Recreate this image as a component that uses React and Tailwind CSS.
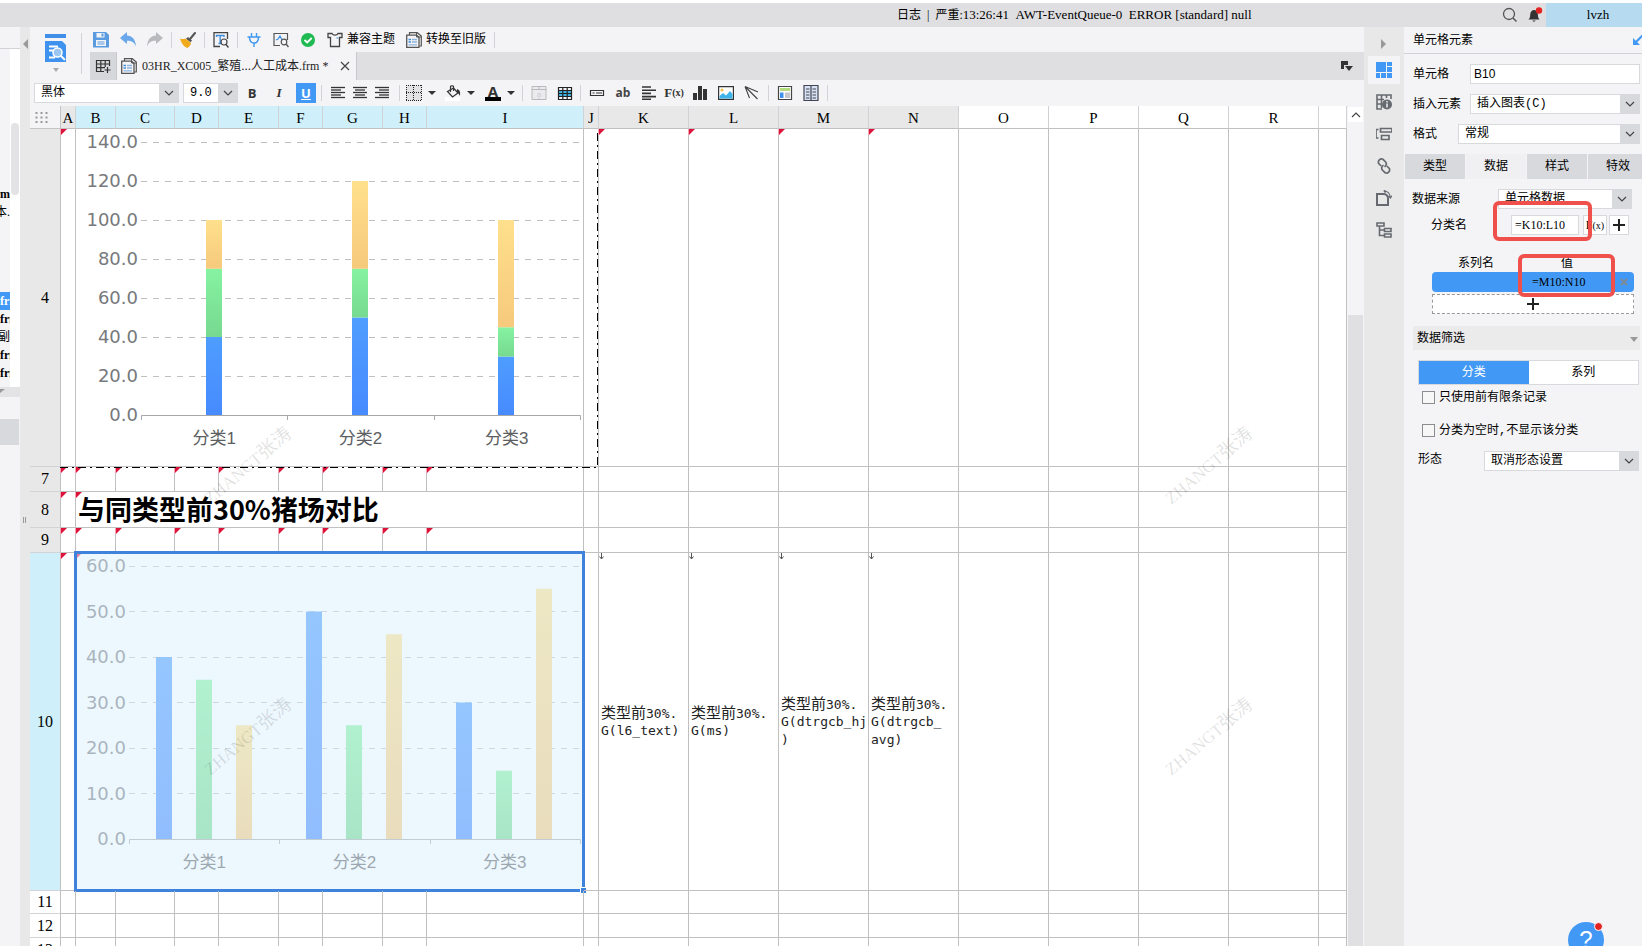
import React from "react";

const UI = "font-['Liberation_Mono','Noto_Sans_CJK_SC',monospace]";
const SERIF = "font-['Liberation_Serif','Noto_Sans_CJK_SC',serif]";

function Glyph({ children, w = 16, h = 16, className = "" }) {
  return (
    <svg width={w} height={h} viewBox={`0 0 ${w} ${h}`} fill="none" className={`block shrink-0 ${className}`} aria-hidden="true">
      {children}
    </svg>
  );
}

function IconButton({ label, children, className = "" }) {
  return (
    <button type="button" aria-label={label} className={`flex shrink-0 items-center justify-center ${className}`}>
      {children}
    </button>
  );
}

function Divider({ className = "" }) {
  return <span className={`h-4 w-px shrink-0 bg-[#d2d3d6] ${className}`} />;
}

function Caret({ className = "" }) {
  return (
    <Glyph w={8} h={4} className={className}>
      <path d="M0 0h8L4 4z" fill="#333" />
    </Glyph>
  );
}

function Select({ label, value, id, className = "" }) {
  return (
    <div className={`relative h-5 ${className}`}>
      <select
        id={id}
        aria-label={label}
        defaultValue={value}
        className="block h-5 w-full appearance-none border border-[#d8d9dd] bg-white pl-[6px] pr-5 text-xs leading-[18px] text-black outline-none"
      >
        <option>{value}</option>
      </select>
      <span className="pointer-events-none absolute inset-y-0 right-0 flex w-5 items-center justify-center bg-[#d8d9dd]">
        <Glyph w={10} h={6}>
          <path d="M1 1l4 4 4-4" stroke="#444" strokeWidth="1.2" />
        </Glyph>
      </span>
    </div>
  );
}

/* ---------- icons ---------- */
const SaveIcon = () => (
  <Glyph>
    <path d="M0 0h13l3 3v12.500H0z" fill="#5b9be0" />
    <path d="M3.500 1h8v4.500h-8z" fill="#f4f4f6" />
    <path d="M8.500 1.500h2v3h-2z" fill="#5b9be0" />
    <path d="M3 8h10v6H3z" fill="#f4f4f6" />
    <path d="M4.500 10h7M4.500 12h7" stroke="#5b9be0" />
  </Glyph>
);
const UndoIcon = () => (
  <Glyph>
    <path d="M0 6L7 0v3.500c5 .3 8.500 3.500 9 11-2-4.500-4.500-5.800-9-5.700V12z" fill="#6aa7ea" />
  </Glyph>
);
const RedoIcon = () => (
  <Glyph>
    <path d="M16 6L9 0v3.500C4 3.800.5 7 0 14.500c2-4.500 4.500-5.800 9-5.700V12z" fill="#b9babd" />
  </Glyph>
);
const BrushIcon = () => (
  <Glyph>
    <path d="M15 1L10 7" stroke="#555" strokeWidth="2" strokeLinecap="round" />
    <path d="M8 5l4 3.500-1.500 1.800L6 6.800z" fill="#555" />
    <path d="M5.500 6.500l5.500 4.500c-.3 2.500-1.800 4-4 5C3.500 14.500 1.500 11.500 0 6.500c2 .8 4 .8 5.500 0z" fill="#f0ab1c" />
  </Glyph>
);
const FindTextIcon = () => (
  <Glyph>
    <path d="M7 14.500H1V.7h13.500V7" stroke="#444" strokeWidth="1.300" />
    <path d="M3.500 5V3.500H11V5M7.200 3.500v8M5.500 11.500H9" stroke="#3f8fe0" strokeWidth="1.400" />
    <circle cx="11" cy="10" r="3" stroke="#444" strokeWidth="1.200" fill="#f4f4f6" />
    <path d="M13 12.500l2.500 3" stroke="#444" strokeWidth="1.400" />
  </Glyph>
);
const PlugIcon = () => (
  <Glyph>
    <path d="M1.500 5h13M3.500 5c0 4.500 1.800 6 4.500 6s4.500-1.500 4.500-6M5.500 1v4M10.500 1v4M8 11v4" stroke="#3f97f0" strokeWidth="1.400" />
  </Glyph>
);
const MonitorIcon = () => (
  <Glyph>
    <path d="M7 13.500H1v-12h13.500V8" stroke="#555" strokeWidth="1.200" />
    <path d="M3 8l2-1 2-3 2 4 1-1" stroke="#3f8fe0" strokeWidth="1.200" />
    <circle cx="11" cy="10" r="2.800" stroke="#555" strokeWidth="1.200" fill="#f4f4f6" />
    <path d="M13 12l2.500 3" stroke="#555" strokeWidth="1.400" />
  </Glyph>
);
const OkIcon = () => (
  <Glyph>
    <circle cx="8" cy="8" r="7" fill="#1fba52" />
    <path d="M4.500 8L7.200 10.500 11.700 6" stroke="#fff" strokeWidth="1.800" />
  </Glyph>
);
const ShirtIcon = () => (
  <Glyph>
    <path d="M5 1.500H1v4h2.500v9h9v-9H15v-4h-4c-1 2.200-5 2.200-6 0z" stroke="#444" strokeWidth="1.300" />
    <path d="M9.500 6h2" stroke="#3f8fe0" />
  </Glyph>
);
const FormIcon = () => (
  <Glyph>
    <path d="M3.500 3V.7h7.800L15.300 4v10h-2" stroke="#555" strokeWidth="1.200" />
    <path d="M.7 3.200h10l2.300 2.300v9.800H.7z" stroke="#555" strokeWidth="1.300" fill="#f4f4f6" />
    <path d="M10.500 1v4H15" stroke="#555" />
    <path d="M2.500 7.500h2.500M2.500 10h2.500" stroke="#3f8fe0" strokeWidth="1.600" />
    <path d="M6 7.500h5M6 10h5M2.500 12.800h8.500" stroke="#8fb4dd" strokeWidth="1.300" />
  </Glyph>
);
const Lines = ({ rows }) => (
  <Glyph h={14}>
    {rows.map(([a, b], i) => (
      <path key={i} d={`M${a} ${1.5 + i * 2.5}H${b}`} stroke="#333" strokeWidth="1.300" />
    ))}
  </Glyph>
);

/* ---------- top bar ---------- */
function TitleBar() {
  return (
    <header className="mt-[3px] flex h-6 shrink-0 items-center bg-[#dfdfe1] pl-[897px] text-black">
      <p className={`flex-1 whitespace-nowrap text-[13px] leading-6 ${SERIF}`}>
        <span className="text-xs">日志 &nbsp;| &nbsp;严重:</span>13:26:41 &nbsp;AWT-EventQueue-0 &nbsp;ERROR [standard] null
      </p>
      <IconButton label="搜索" className="mr-[9px] w-4">
        <Glyph>
          <circle cx="7" cy="7" r="5.500" stroke="#555" strokeWidth="1.300" />
          <path d="M11 11l3.500 3.500" stroke="#555" strokeWidth="1.500" />
        </Glyph>
      </IconButton>
      <IconButton label="通知" className="mr-[3px] w-4">
        <Glyph>
          <path d="M1.500 12.500C3 11 3 10 3.200 7.500 3.500 4.500 5 3 7 3s3.600 1.500 3.900 4.500c.2 2.500.2 3.500 1.700 5zM5.500 13.500h3c0 1.500-3 1.500-3 0z" fill="#333" />
          <circle cx="12" cy="3.500" r="3.200" fill="#e32222" />
        </Glyph>
      </IconButton>
      <button type="button" className={`h-6 w-24 bg-[#b6dbf0] pl-2 text-[13px] leading-6 ${SERIF}`}>
        lvzh
      </button>
    </header>
  );
}

const FILES = [
  { text: "rm", tone: "justify-end font-bold" },
  { text: "本.", tone: "justify-end" },
  { text: "frm", tone: "mt-[71px] bg-[#4299f5] font-bold text-white" },
  { text: "frm", tone: "font-bold" },
  { text: "的副", tone: "justify-end" },
  { text: "frm", tone: "font-bold" },
  { text: "frm", tone: "font-bold" },
];

function LeftDock() {
  return (
    <aside className={`flex w-[30px] shrink-0 bg-[#e8e8e8] text-xs text-black ${SERIF}`}>
      <div className="flex w-5 flex-col bg-[#f4f4f6]">
        <div className="h-[22px] shrink-0 border-b border-[#d2d3d6]" />
        <div className="flex h-[338px] shrink-0">
          <ul className="w-[10px] overflow-hidden pt-[136px] leading-[18px]">
            {FILES.map((f, i) => (
              <li key={i} className={`flex h-[18px] overflow-hidden whitespace-nowrap ${f.tone}`}>{f.text}</li>
            ))}
          </ul>
          <div className="w-[10px] bg-white pt-[74px]">
            <div className="mx-px h-[72px] rounded bg-[#e3e3e5]" />
          </div>
        </div>
        <div className="h-[10px] shrink-0 bg-[#e3e3e5]">
          <Glyph w={6} h={6}>
            <path d="M0 2h5L0 6z" fill="#999" />
          </Glyph>
        </div>
        <div className="mt-[22px] h-[26px] w-[19px] shrink-0 bg-[#d8d9dd]" />
      </div>
      <div className="flex w-[10px] flex-col items-center pt-3">
        <Glyph w={6} h={10}>
          <path d="M6 0v10L1 5z" fill="#999" />
        </Glyph>
        <Glyph w={6} h={6} className="mt-[468px]">
          <path d="M1.500 0v6M3.500 0v6" stroke="#999" />
        </Glyph>
      </div>
    </aside>
  );
}

function MainTools() {
  return (
    <div className="flex h-[53px] shrink-0 bg-[#f4f4f6]">
      <div className="flex w-[60px] shrink-0 justify-between pl-[15px] pr-2">
        <button type="button" aria-label="模板" className="flex flex-col items-center pt-[7px]">
          <Glyph w={22} h={28}>
            <path d="M0 0h21v4H0z" fill="#3f8fe8" />
            <path d="M0 7h17l4 4v17H0z" fill="#3f93ee" />
            <path d="M4 12.500h9M4 16.500h5M4 23.500h6" stroke="#fff" strokeWidth="1.800" />
            <circle cx="12.500" cy="18.500" r="4.500" fill="#9cc6f2" stroke="#fff" strokeWidth="1.500" />
            <path d="M16 22l4 4" stroke="#fff" strokeWidth="2" />
          </Glyph>
          <Glyph w={6} h={4} className="mt-[6px]">
            <path d="M0 0h6L3 4z" fill="#aaa" />
          </Glyph>
        </button>
        <span className="my-[6px] w-px bg-[#d2d3d6]" />
      </div>
      <div className="flex min-w-0 flex-1 flex-col">
        <div className="flex h-[25px] items-center gap-[11px] pl-[3px] text-xs text-black">
          <IconButton label="保存"><SaveIcon /></IconButton>
          <IconButton label="撤销"><UndoIcon /></IconButton>
          <IconButton label="重做"><RedoIcon /></IconButton>
          <Divider className="-mx-[3px]" />
          <IconButton label="格式刷"><BrushIcon /></IconButton>
          <Divider className="-mx-[3px]" />
          <IconButton label="查找"><FindTextIcon /></IconButton>
          <Divider className="-mx-[3px]" />
          <IconButton label="连接"><PlugIcon /></IconButton>
          <IconButton label="检测"><MonitorIcon /></IconButton>
          <IconButton label="通过"><OkIcon /></IconButton>
          <button type="button" className="flex items-center gap-1 whitespace-nowrap"><ShirtIcon />兼容主题</button>
          <button type="button" className="flex items-center gap-1 whitespace-nowrap"><FormIcon />转换至旧版</button>
          <Divider className="-mx-[3px]" />
        </div>
        <div className="flex h-7 bg-[#dfdfe1]">
          <IconButton label="新建" className="w-[26px] bg-[#d6d7da]">
            <Glyph>
              <path d="M9 13.500H1.500v-11h13V8M1.500 6h13M1.500 9.700H10M5.800 2.500v11M10.200 2.500V9" stroke="#333" strokeWidth="1.200" />
              <path d="M12.500 9v6M9.500 12h6" stroke="#333" strokeWidth="1.200" />
            </Glyph>
          </IconButton>
          <div className={`flex w-[241px] items-center border-x border-[#c8c9cc] bg-[#f4f4f6] pl-1 pr-[6px] text-[13px] text-[#222] ${SERIF}`}>
            <FormIcon />
            <a href="#tab" className="ml-[5px] flex-1 whitespace-nowrap">
              <span className="text-xs">03HR_XC005_繁殖</span>...<span className="text-xs">人工成本.frm *</span>
            </a>
            <IconButton label="关闭">
              <Glyph w={10} h={10}>
                <path d="M1 1l8 8M9 1L1 9" stroke="#444" strokeWidth="1.200" />
              </Glyph>
            </IconButton>
          </div>
          <IconButton label="标签列表" className="ml-auto mr-[11px]">
            <Glyph w={12} h={10}>
              <path d="M0 0h7v4H3v4H0z" fill="#333" />
              <path d="M4 5h8l-4 5z" fill="#333" />
            </Glyph>
          </IconButton>
        </div>
      </div>
    </div>
  );
}

function FormatTools() {
  return (
    <div className="flex h-[26px] shrink-0 items-center bg-[#f4f4f6] pl-1 font-['Open_Sans',sans-serif] text-[#333]">
      <Select label="字体" value="黑体" className={`w-[145px] ${UI}`} />
      <Select label="字号" value="9.0" className={`ml-1 w-[55px] ${UI}`} />
      <div className="ml-1 flex gap-[7px] text-[13px] font-bold leading-5">
        <button type="button" className="h-5 w-5">B</button>
        <button type="button" className="h-5 w-5 font-['Liberation_Serif',serif] italic">I</button>
        <button type="button" className="h-5 w-5 bg-[#4299f5] text-white underline">U</button>
      </div>
      <Divider className="ml-[5px] mr-2" />
      <div className="flex gap-[6px]">
        <IconButton label="左对齐"><Lines rows={[[1, 15], [1, 11], [1, 15], [1, 11], [1, 15]]} /></IconButton>
        <IconButton label="居中"><Lines rows={[[1, 15], [3, 13], [1, 15], [3, 13], [1, 15]]} /></IconButton>
        <IconButton label="右对齐"><Lines rows={[[1, 15], [5, 15], [1, 15], [5, 15], [1, 15]]} /></IconButton>
      </div>
      <Divider className="ml-[9px] mr-[6px]" />
      <button type="button" aria-label="边框" className="flex items-center gap-[6px]">
        <Glyph>
          <path d="M.5.5h15v15H.5z" fill="#e2e2e4" />
          <path d="M0 .5h16M0 15.500h16M.5 0v16M15.500 0v16M0 7.500h16M7.500 0v16" stroke="#222" strokeDasharray="1 1" />
        </Glyph>
        <Caret />
      </button>
      <button type="button" aria-label="填充" className="ml-[9px] flex items-center gap-[6px]">
        <Glyph>
          <path d="M0 12h15v4H0z" fill="#fff" />
          <path d="M2.500 6.500L8.500 3l4.500 5-5.500 4z" stroke="#333" strokeWidth="1.300" />
          <path d="M5.500 7V1.500c0-1 3-1 3 0V6" stroke="#333" strokeWidth="1.200" />
          <path d="M12 4c3 1 3.500 3 3 7-1-2-1.500-3-3-3.500z" fill="#333" />
        </Glyph>
        <Caret />
      </button>
      <button type="button" aria-label="字体颜色" className="ml-[10px] flex items-center gap-[6px]">
        <span className="flex w-4 flex-col items-center">
          <span className="h-3 text-[15px] font-bold leading-[12px]">A</span>
          <span className="h-1 w-4 bg-black" />
        </span>
        <Caret />
      </button>
      <Divider className="ml-[7px] mr-2" />
      <div className="flex items-center gap-[10px]">
        <IconButton label="合并单元格">
          <Glyph>
            <path d="M1 1.500h14v13H1zM1 4.500h14M8 1v3M8 13v2" stroke="#b8b9bc" fill="#ebebed" />
            <text x="8" y="12" textAnchor="middle" fontSize="8" fill="#c8c9cc">a</text>
          </Glyph>
        </IconButton>
        <IconButton label="表格">
          <Glyph>
            <path d="M1 5h14v7H1z" fill="#3fb4e4" />
            <path d="M1.500 2.500h13v12h-13zM1.500 5.500h13M1.500 8.500h13M1.500 11.500h13M5.800 2.500v12M10.200 2.500v12" stroke="#222" strokeWidth="1.200" />
          </Glyph>
        </IconButton>
      </div>
      <Divider className="ml-[7px] mr-2" />
      <div className="flex items-center gap-[10px]">
        <IconButton label="字段">
          <Glyph>
            <path d="M1.500 5.500h13v5h-13zM3.500 8h2M7 8h6" stroke="#333" strokeWidth="1.200" />
          </Glyph>
        </IconButton>
        <button type="button" className="flex h-4 w-4 justify-center text-xs font-bold leading-4 text-[#444]">ab</button>
        <Glyph h={14} className="-mr-px">
          <path d="M1 1h9M1 4.200h14M1 7.400h9M1 10.600h14M1 13.300h9" stroke="#333" strokeWidth="1.600" />
        </Glyph>
        <button type="button" className="flex h-4 w-4 items-center justify-center whitespace-nowrap font-['Liberation_Serif',serif] text-[13px] font-bold leading-4">
          F<span className="text-[10px]">(x)</span>
        </button>
        <IconButton label="图表">
          <Glyph>
            <path d="M1 8h4v7H1zM6 1h4v14H6zM11 4h4v11h-4z" fill="#333" />
          </Glyph>
        </IconButton>
        <IconButton label="图片">
          <Glyph>
            <path d="M.6 1.600h14.800v12.800H.6z" stroke="#333" strokeWidth="1.200" fill="#fff" />
            <circle cx="4" cy="5" r="1.600" fill="#f3c44c" />
            <path d="M1.500 13.500V11L5 8l3 2.500L12 6l2.500 3v4.500z" fill="#3fb4ea" />
          </Glyph>
        </IconButton>
        <IconButton label="斜线">
          <Glyph>
            <path d="M1 1.500L14 7M1 1.500L13.500 14M1 1.500L5.500 13" stroke="#444" strokeWidth="1.100" />
          </Glyph>
        </IconButton>
      </div>
      <Divider className="mx-2" />
      <div className="flex items-center gap-[10px]">
        <IconButton label="报表块">
          <Glyph>
            <path d="M1.500 1.500h13v13h-13z" stroke="#444" strokeWidth="1.200" fill="#fff" />
            <path d="M3 3h10v3H3z" fill="#b4dc7c" />
            <path d="M3 7.500h3.500V13H3z" fill="#3f93ee" />
            <path d="M8 7.500h5V13H8z" fill="#c6c7ca" />
          </Glyph>
        </IconButton>
        <IconButton label="分栏">
          <Glyph>
            <path d="M1 .5h14v15H1zM8 1v15" stroke="#445" strokeWidth="1.200" fill="#d7e3f2" />
            <path d="M3 4h3.500M3 7h3.500M3 10h3.500M3 13h3.500M9.500 4H13M9.500 7H13M9.500 10H13M9.500 13H13" stroke="#445" />
          </Glyph>
        </IconButton>
      </div>
      <Divider className="ml-2" />
    </div>
  );
}

/* ---------- charts ---------- */
const FILLS = ["blue", "green", "gold"];

function Chart({ id, left, max, unit, step, data, stacked }) {
  const right = 504;
  const base = 286;
  const slot = (right - left) / 3;
  const y = (v) => base - (v / unit) * step;
  const ticks = [];
  for (let v = 0; v <= max; v += unit) ticks.push(v);
  const bars = [];
  data.forEach((vals, i) => {
    const cx = Math.floor(left + slot * (i + 0.5));
    let sum = 0;
    vals.forEach((v, j) => {
      const x = stacked ? cx - 8 : cx - 48 + j * 40;
      bars.push({ x, top: y(sum + v), h: (v / unit) * step, fill: FILLS[j] });
      if (stacked) sum += v;
    });
  });
  return (
    <svg viewBox="0 0 507 337" width="507" height="337" className="block" role="img" aria-label="柱形图">
      <defs>
        {[["blue", "#4e9dff", "#478bff"], ["green", "#86f3a2", "#76d98f"], ["gold", "#ffe08c", "#f6c97c"]].map(([n, a, b]) => (
          <linearGradient key={n} id={`${id}-${n}`} x1="0" y1="0" x2="0" y2="1">
            <stop offset="0" stopColor={a} />
            <stop offset="1" stopColor={b} />
          </linearGradient>
        ))}
      </defs>
      {ticks.map((v) => (
        <g key={v}>
          {v > 0 && <path d={`M${left} ${Math.floor(y(v)) + 0.5}H${right}`} stroke="#c0c0c0" strokeDasharray="6 6" />}
          <text x={left - 3} y={y(v) + 6} textAnchor="end" fontSize="18" fill="#77797c" className="font-['DejaVu_Sans',sans-serif]">
            {v.toFixed(1)}
          </text>
        </g>
      ))}
      {bars.map((b, i) => (
        <rect key={i} x={b.x} y={b.top} width="16" height={b.h} fill={`url(#${id}-${b.fill})`} />
      ))}
      <path
        d={`M${left + 0.5} 291v-4.500H${right + 0.5}v4.500M${Math.round(left + slot) + 0.5} 286v5M${Math.round(left + slot * 2) + 0.5} 286v5`}
        stroke="#a8a8a8"
        fill="none"
      />
      {data.map((_, i) => (
        <text key={i} x={left + slot * (i + 0.5)} y="315" textAnchor="middle" fontSize="17" fill="#5c5e61" className="font-['Liberation_Sans','Noto_Sans_CJK_SC',sans-serif]">
          {`分类${i + 1}`}
        </text>
      ))}
    </svg>
  );
}

/* ---------- sheet ---------- */
const COLS = [
  ["A", "w-[15px]"], ["B", "w-[40px]"], ["C", "w-[59px]"], ["D", "w-[44px]"], ["E", "w-[60px]"], ["F", "w-[44px]"],
  ["G", "w-[60px]"], ["H", "w-[44px]"], ["I", "w-[157px]"], ["J", "w-[15px]"], ["K", "w-[90px]"], ["L", "w-[90px]"],
  ["M", "w-[90px]"], ["N", "w-[90px]"], ["O", "w-[90px]"], ["P", "w-[90px]"], ["Q", "w-[90px]"], ["R", "w-[90px]"], ["", ""],
];

const ROWS = [
  { n: "4", h: "h-[338px]", head: "bg-[#e8e8e8]", flags: "AKLMN", merge: "chart1" },
  { n: "7", h: "h-[25px]", head: "bg-[#e8e8e8]", flags: "ABCDEFGHI" },
  { n: "8", h: "h-[36px]", head: "bg-[#e8e8e8]", flags: "AB", merge: "title" },
  { n: "9", h: "h-[25px]", head: "bg-[#e8e8e8]", flags: "ABCDEFGHI" },
  { n: "10", h: "h-[338px]", head: "bg-[#cff0fb]", flags: "AB", merge: "chart2" },
  { n: "11", h: "h-[23px]", head: "bg-white", flags: "" },
  { n: "12", h: "h-[24px]", head: "bg-white", flags: "" },
  { n: "13", h: "h-[24px]", head: "bg-white", flags: "" },
];

const FORMULAS = {
  K: ["类型前", "30%.", "G(l6_text)"],
  L: ["类型前", "30%.", "G(ms)"],
  M: ["类型前", "30%.", "G(dtrgcb_hj", ")"],
  N: ["类型前", "30%.", "G(dtrgcb_", "avg)"],
};

function Flag() {
  return (
    <svg width="7" height="6" viewBox="0 0 7 6" className="absolute -left-px top-0" aria-hidden="true">
      <path d="M0 0h1v6H0z" fill="#f5a3b3" />
      <path d="M1 0h6L1 6z" fill="#dc143c" />
    </svg>
  );
}

function Merged({ kind }) {
  if (kind === "title") {
    return (
      <div className="h-[35px] whitespace-nowrap pl-[2px] font-['Noto_Sans_CJK_SC',sans-serif] text-[27px] font-bold leading-[33px]">
        与同类型前30%猪场对比
      </div>
    );
  }
  if (kind === "chart1") {
    return <Chart id="c1" left={65} max={140} unit={20} step={39} stacked data={[[40, 35, 25], [50, 25, 45], [30, 15, 55]]} />;
  }
  return (
    <>
      <Chart id="c2" left={53} max={60} unit={10} step={45.5} data={[[40, 35, 25], [50, 25, 45], [30, 15, 55]]} />
      <div className="absolute -bottom-[2px] -left-[2px] -right-[2px] -top-[2px] border-[3px] border-[#3f82dc] bg-[#dceffe]/50">
        <span className="absolute -bottom-1 -right-1 h-[6px] w-[6px] border-l border-t border-white bg-[#3f82dc]" />
      </div>
    </>
  );
}

function Sheet() {
  return (
    <div className="relative min-w-0 flex-1 overflow-hidden bg-white">
      <table className="w-full table-fixed border-separate border-spacing-0 text-black">
        <thead>
          <tr className={`h-[23px] text-[15px] leading-5 ${SERIF}`}>
            <th className="w-[31px] border-b border-r border-[#c4c4c4] bg-[#f4f4f6] p-0">
              <Glyph w={14} h={11} className="ml-[5px]">
                <path d="M1.500 0v11M6.500 0v11M11.500 0v11" stroke="#999" strokeWidth="2" strokeDasharray="2 2.500" />
              </Glyph>
            </th>
            {COLS.map(([c, w], i) => (
              <th
                key={i}
                scope="col"
                className={`h-[23px] border-b border-r border-b-[#c0c0c0] border-r-[#d0d3d6] p-0 pt-[2px] font-normal ${w} ${
                  i > 0 && i < 9 ? "bg-[#cff0fb]" : i < 14 ? "bg-[#e8e8e8]" : "bg-white"
                }`}
              >
                {c}
              </th>
            ))}
          </tr>
        </thead>
        <tbody>
          {ROWS.map((r) => (
            <tr key={r.n}>
              <th scope="row" className={`border-b border-r border-b-[#d2d3d6] border-r-[#c0c0c0] p-0 text-base font-normal leading-4 ${SERIF} ${r.h} ${r.head}`}>
                {r.n}
              </th>
              {COLS.map(([c], i) => {
                if (r.merge && i > 1 && i < 9) return null;
                const merged = r.merge && i === 1;
                const formula = r.n === "10" ? FORMULAS[c] : null;
                return (
                  <td key={i} colSpan={merged ? 8 : 1} className="relative border-b border-r border-[#c0c0c0] p-0">
                    {c && r.flags.includes(c) && <Flag />}
                    {merged && <Merged kind={r.merge} />}
                    {formula && (
                      <>
                        <Glyph w={6} h={7} className="absolute left-0 top-0">
                          <path d="M2.500 0v6M.5 3.500l2 2.500 2-2.500" stroke="#555" />
                        </Glyph>
                        <div className="whitespace-nowrap pl-[2px] pt-px font-['DejaVu_Sans_Mono','Noto_Sans_CJK_SC',monospace] text-[13px] leading-[18px] text-[#222]">
                          <div className="h-[18px]">
                            <span className="text-[15px]">{formula[0]}</span>
                            {formula[1]}
                          </div>
                          {formula.slice(2).map((t) => (
                            <div key={t}>{t}</div>
                          ))}
                        </div>
                      </>
                    )}
                  </td>
                );
              })}
            </tr>
          ))}
        </tbody>
      </table>
      <svg width="568" height="362" viewBox="0 0 568 362" className="pointer-events-none absolute left-0 top-0" aria-hidden="true">
        <path d="M30 361.500H567.500V23" fill="none" stroke="#000" strokeDasharray="8 4 2 4" />
      </svg>
      {["left-[218px] top-[360px]", "left-[218px] top-[631px]", "left-[1179px] top-[360px]", "left-[1179px] top-[631px]"].map((p) => (
        <div key={p} className={`pointer-events-none absolute h-0 w-0 ${p}`}>
          <span className={`absolute block w-[120px] -translate-x-1/2 -translate-y-1/2 -rotate-40 whitespace-nowrap text-center text-[17px] leading-6 text-black/12 ${SERIF}`}>
            ZHANGT<span className="text-[19px]">张涛</span>
          </span>
        </div>
      ))}
    </div>
  );
}

function SheetScroll() {
  return (
    <div className="flex w-[17px] shrink-0 flex-col bg-[#f4f4f6] px-px pt-px">
      <IconButton label="向上滚动" className="h-[15px] bg-white">
        <Glyph w={10} h={6}>
          <path d="M1 5l4-4 4 4" stroke="#444" strokeWidth="1.200" />
        </Glyph>
      </IconButton>
      <div className="mt-[193px] flex-1 bg-[#e0e0e2]" />
    </div>
  );
}

/* ---------- right dock ---------- */
const DOCK = [
  { label: "单元格元素", art: <path d="M0 0h10v10H0zM11 0h5v4h-5zM11 5h5v5h-5zM0 11h4v5H0zM5 11h5v5H5zM11 11h5v5h-5z" fill="#4299f5" /> },
  {
    label: "单元格属性",
    art: (
      <>
        <path d="M6 15H1V1h14v4M1 5.500h7M1 10h5M5.500 1v13M10.500 1v3" stroke="#666a70" strokeWidth="1.600" />
        <circle cx="11" cy="10.500" r="5" fill="#666a70" />
        <path d="M11 7v1.500M11 9.500v4" stroke="#e8e8e8" strokeWidth="1.600" />
      </>
    ),
  },
  { label: "悬浮元素", art: <path d="M2.500 3.500H0v8.500h2.500M4.500 2.500H16v3.500H4.500zM5.500 9.500H13v4H5.500z" stroke="#666a70" strokeWidth="1.700" /> },
  {
    label: "超级链接",
    art: (
      <g stroke="#666a70" strokeWidth="1.700" transform="rotate(45 8 8)">
        <path d="M6 10H2.500a3.200 3.200 0 0 1 0-6H6a3 3 0 0 1 2.800 4.200" />
        <path d="M10 6h3.500a3.200 3.200 0 0 1 0 6H10a3 3 0 0 1-2.800-4.200" />
      </g>
    ),
  },
  {
    label: "条件属性",
    art: (
      <>
        <path d="M1 4h7c2 0 4 2 4 4v7H1z" stroke="#666a70" strokeWidth="2" />
        <path d="M8 1c4 0 6 3 6.500 6.500M12.500 6l2 2 1.500-2.500M9.500 0L8 1l1.500 2" stroke="#666a70" strokeWidth="1.100" />
      </>
    ),
  },
  { label: "控件设置", art: <path d="M1 1h7v3H1zM8.500 6.500H15V9.500H8.500zM8.500 12H15v3H8.500zM3.500 4v9.500h5M3.500 8h5" stroke="#666a70" strokeWidth="1.600" /> },
];

function DockRail() {
  return (
    <nav className="flex w-10 shrink-0 flex-col items-center gap-1 bg-[#e8e8e8] pt-3">
      <Glyph w={6} h={10} className="-mb-px">
        <path d="M0 0v10l5-5z" fill="#999" />
      </Glyph>
      {DOCK.map((d, i) => (
        <IconButton key={d.label} label={d.label} className={`h-7 w-8 ${i === 0 ? "mt-1 bg-[#f4f4f6]" : ""}`}>
          <Glyph>{d.art}</Glyph>
        </IconButton>
      ))}
    </nav>
  );
}

const RED = "pointer-events-none absolute z-10 rounded-md border-4 border-[#f0504c]";
const LABEL = "h-5 leading-[22px]";

function PropertyPanel() {
  return (
    <section className={`relative w-[238px] shrink-0 overflow-hidden bg-[#f4f4f6] text-xs leading-5 text-black ${UI}`}>
      <div className="flex h-[27px] items-center justify-between border-b border-[#d2d3d6] pl-[9px]">
        <h2 className={LABEL}>单元格元素</h2>
        <IconButton label="弹出">
          <Glyph w={9} h={12}>
            <path d="M10 1L2 9" stroke="#4299f5" strokeWidth="2" />
            <path d="M0 4l7 7H0z" fill="#4299f5" />
          </Glyph>
        </IconButton>
      </div>
      <div className="flex flex-col gap-[10px] pb-[10px] pl-[9px] pr-[2px] pt-[10px]">
        <div className="flex">
          <label htmlFor="cell" className={`w-[57px] ${LABEL}`}>单元格</label>
          <input id="cell" defaultValue="B10" className="h-5 min-w-0 flex-1 border border-[#d8d9dd] bg-white px-[3px] font-['Liberation_Sans',sans-serif]" />
        </div>
        <div className="flex">
          <label htmlFor="elem" className={`w-[57px] ${LABEL}`}>插入元素</label>
          <Select id="elem" value="插入图表(C)" className="min-w-0 flex-1" />
        </div>
        <div className="flex">
          <label htmlFor="fmt" className={`w-[45px] ${LABEL}`}>格式</label>
          <Select id="fmt" value="常规" className="min-w-0 flex-1" />
        </div>
      </div>
      <div className="flex gap-px pl-px" role="tablist">
        {["类型", "数据", "样式", "特效"].map((t) => (
          <button key={t} type="button" role="tab" className={`h-[25px] w-[60px] shrink-0 pt-px ${t === "数据" ? "bg-[#f0f0f2]" : "bg-[#d8d9dd]"}`}>
            {t}
          </button>
        ))}
      </div>
      <div className="mt-[10px] flex pl-2 pr-[10px]">
        <label htmlFor="src" className={`w-[86px] ${LABEL}`}>数据来源</label>
        <Select id="src" value="单元格数据" className="min-w-0 flex-1" />
      </div>
      <div className="mt-[6px] flex pl-[27px]">
        <label htmlFor="cat" className={`w-[80px] ${LABEL}`}>分类名</label>
        <div className="relative">
          <input id="cat" defaultValue="=K10:L10" className={`block h-5 w-[68px] border border-[#d8d9dd] bg-white px-[3px] ${SERIF}`} />
          <span className={`${RED} -left-[18px] -top-[14px] h-10 w-[99px]`} />
        </div>
        <button type="button" className="ml-1 h-5 w-6 border border-[#d8d9dd] bg-white font-['Liberation_Serif',serif] leading-[18px]">
          F<span className="text-[10px]">(x)</span>
        </button>
        <IconButton label="添加分类" className="ml-[2px] h-5 w-5 border border-[#d8d9dd] bg-white">
          <Glyph w={12} h={12}>
            <path d="M6 0v12M0 6h12" stroke="#222" strokeWidth="2" />
          </Glyph>
        </IconButton>
      </div>
      <div className="mt-[18px] pl-7 pr-2">
        <div className="grid h-[19px] grid-cols-[88px_94px_1fr] text-center leading-[22px]">
          <span>系列名</span>
          <span>值</span>
        </div>
        <div className="relative flex h-5 items-center rounded bg-[#4299f5] pr-[6px]">
          <input aria-label="系列名" className="h-5 w-[97px] bg-transparent" />
          <input aria-label="值" defaultValue="=M10:N10" className={`h-5 w-[74px] bg-transparent px-[3px] ${SERIF}`} />
          <span className={`${RED} -top-[18px] left-[86px] h-[43px] w-[97px]`} />
          <IconButton label="删除" className="ml-auto">
            <Glyph w={8} h={8}>
              <path d="M1 1l6 6M7 1L1 7" stroke="#7d8a96" strokeWidth="2" />
            </Glyph>
          </IconButton>
        </div>
        <button type="button" aria-label="添加系列" className="mt-[2px] flex h-5 w-full items-center justify-center border border-dashed border-[#999] bg-white">
          <Glyph w={12} h={12}>
            <path d="M6 0v12M0 6h12" stroke="#222" strokeWidth="2" />
          </Glyph>
        </button>
      </div>
      <button type="button" className="ml-[9px] mt-3 flex h-6 w-[227px] items-center justify-between bg-[#ebebec] pl-1 pr-[2px] pt-[2px]">
        数据筛选
        <Glyph w={8} h={5}>
          <path d="M0 0h8L4 5z" fill="#999" />
        </Glyph>
      </button>
      <div className="pl-[14px] pr-[3px]">
        <div className="mt-[10px] flex h-[25px] border border-[#d8d9dd]">
          <button type="button" className="flex-1 bg-[#4299f5] text-white">分类</button>
          <button type="button" className="flex-1 bg-white">系列</button>
        </div>
        <label className="ml-1 mt-[2px] flex h-5 items-center gap-1">
          <input type="checkbox" className="h-[13px] w-[13px] appearance-none border border-[#8c8d90] bg-[#f7f7f8]" />
          <span className={LABEL}>只使用前有限条记录</span>
        </label>
        <label className="ml-1 mt-[13px] flex h-5 items-center gap-1">
          <input type="checkbox" className="h-[13px] w-[13px] appearance-none border border-[#8c8d90] bg-[#f7f7f8]" />
          <span className={LABEL}>分类为空时,不显示该分类</span>
        </label>
        <div className="mt-[11px] flex items-start">
          <label htmlFor="mode" className="w-[66px] leading-[18px]">形态</label>
          <Select id="mode" value="取消形态设置" className="min-w-0 flex-1" />
        </div>
      </div>
      <button type="button" aria-label="帮助" className="absolute -bottom-3 right-[38px] flex h-9 w-9 justify-center rounded-full bg-[#4299f5] pt-[6px] font-['Liberation_Sans',sans-serif] text-2xl leading-6 text-white">
        ?
        <span className="absolute right-px top-0 h-[9px] w-[9px] rounded-full border border-white bg-[#e32222]" />
      </button>
    </section>
  );
}

export default function App() {
  return (
    <div className={`flex h-screen flex-col overflow-hidden bg-white ${UI}`}>
      <TitleBar />
      <div className="flex min-h-0 flex-1">
        <LeftDock />
        <main className="flex min-w-0 flex-1 flex-col">
          <MainTools />
          <FormatTools />
          <div className="flex min-h-0 flex-1">
            <Sheet />
            <SheetScroll />
          </div>
        </main>
        <DockRail />
        <PropertyPanel />
      </div>
    </div>
  );
}
